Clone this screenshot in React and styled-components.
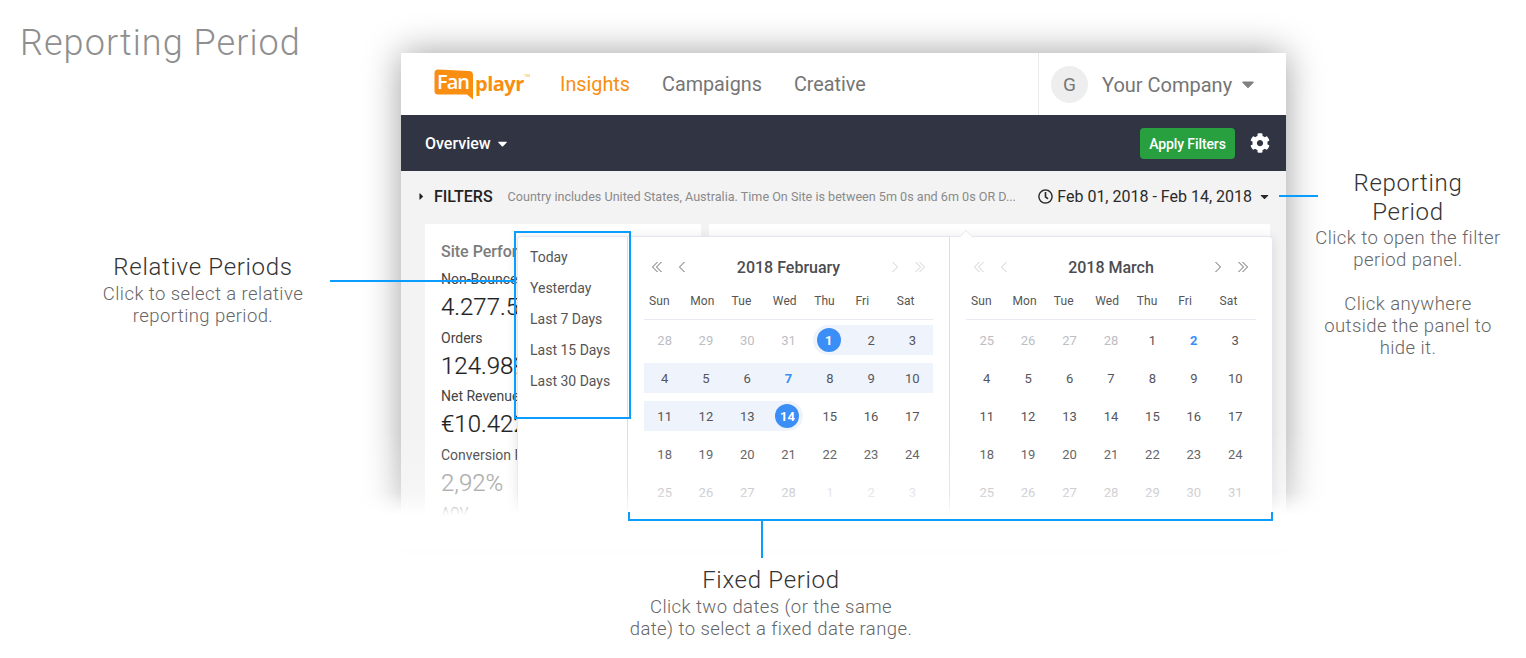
import React from "react";
import styled, { createGlobalStyle } from "styled-components";
import { FaCog, FaRegClock, FaCaretDown, FaCaretRight } from "react-icons/fa";

const Global = createGlobalStyle`
  html, body { margin: 0; padding: 0; background: #fff; }
  body { font-family: Roboto, "Liberation Sans", sans-serif; }
  * { box-sizing: border-box; }
`;

const Canvas = styled.div`
  position: relative;
  width: 1526px;
  height: 658px;
  overflow: hidden;
  background: #fff;
`;

const PageTitle = styled.div`
  position: absolute;
  left: 20px;
  top: 22px;
  font: 300 36px/42px Roboto, sans-serif;
  letter-spacing: 1.07px;
  color: #8f8f8f;
`;

const Window = styled.div`
  position: absolute;
  left: 401px;
  top: 53px;
  width: 885px;
  height: 462px;
  background: #f3f3f3;
  box-shadow: 0 0 34px rgba(0, 0, 0, 0.38);
  display: flex;
  flex-direction: column;
`;

const Header = styled.header`
  height: 62px;
  flex: none;
  background: #fff;
  display: flex;
  align-items: center;
  padding-left: 33px;
`;

const LogoWrap = styled.div`
  position: relative;
  width: 94px;
  height: 30px;
  margin-right: 32px;
  display: flex;
  align-items: center;
`;

const LogoBubble = styled.svg`
  position: absolute;
  left: 0;
  top: 0;
`;

const LogoFan = styled.span`
  position: relative;
  width: 41px;
  padding-left: 3px;
  font: 600 20px/22px "Open Sans", sans-serif;
  letter-spacing: -1px;
  color: #fff;
  margin-top: -4px;
`;

const LogoPlayr = styled.span`
  position: relative;
  font: 700 20px/22px "Open Sans", sans-serif;
  letter-spacing: -0.5px;
  color: #f98e10;
  margin-top: -1px;
`;

const LogoTm = styled.sup`
  position: absolute;
  left: 90px;
  top: 5px;
  margin: 0;
  font-size: 4px;
  line-height: 4px;
  color: #f9a850;
`;

const Nav = styled.nav`
  display: flex;
  gap: 32px;
  padding-top: 2px;
`;

const NavLink = styled.span`
  font-size: 19.8px;
  line-height: 24px;
  color: ${(p) => (p.$active ? "#f98e10" : "#757575")};
`;

const Account = styled.div`
  margin-left: auto;
  width: 248px;
  height: 100%;
  border-left: 1px solid #eaeaea;
  display: flex;
  align-items: center;
  padding-left: 12px;
  color: #757575;
`;

const Avatar = styled.div`
  width: 37px;
  height: 37px;
  border-radius: 50%;
  background: #eeeeee;
  display: flex;
  align-items: center;
  justify-content: center;
  font-size: 19px;
  color: #777;
  margin-right: 14px;
`;

const AccountName = styled.span`
  font-size: 20px;
  padding-top: 1px;
  margin-right: 6px;
`;

const Toolbar = styled.div`
  height: 56px;
  flex: none;
  background: #313543;
  color: #fff;
  display: flex;
  align-items: center;
  padding: 0 16px 0 24px;
`;

const ToolbarTitle = styled.span`
  font-size: 16px;
  font-weight: 500;
  margin-right: 4px;
`;

const ApplyButton = styled.button`
  margin-left: auto;
  width: 95px;
  height: 31px;
  border: 0;
  border-radius: 4px;
  background: #28a040;
  color: #fff;
  font: 500 14px Roboto, sans-serif;
  letter-spacing: -0.1px;
  padding: 2px 0 0;
  margin-right: 15px;
`;

const FilterRow = styled.div`
  height: 53px;
  flex: none;
  display: flex;
  align-items: center;
  padding: 0 15px 3px 15px;
`;

const FilterLabel = styled.span`
  font-size: 16px;
  font-weight: 500;
  color: #222;
  margin: 0 15px 0 7px;
`;

const FilterSummary = styled.span`
  font-size: 12.6px;
  color: #8a8a8a;
  white-space: nowrap;
`;

const DateRange = styled.div`
  margin-left: auto;
  display: flex;
  align-items: center;
  font-size: 16px;
  color: #2a2a2a;
  svg:first-child { margin-right: 4px; }
  svg:last-child { margin-left: 6px; }
`;

const Cards = styled.div`
  display: flex;
  gap: 8px;
  padding: 0 16px 0 24px;
  flex: 1;
  min-height: 0;
`;

const Card = styled.div`
  background: #fff;
  width: ${(p) => p.$w || "auto"};
  flex: ${(p) => (p.$w ? "none" : "1")};
  padding: 18px 16px 0;
  overflow: hidden;
`;

const CardTitle = styled.div`
  font-size: 16px;
  line-height: 20px;
  font-weight: 500;
  color: #7c7c7c;
  white-space: nowrap;
  margin-bottom: 7px;
`;

const MetricLabel = styled.div`
  font-size: 14px;
  line-height: 20px;
  color: #444;
  white-space: nowrap;
`;

const MetricValue = styled.div`
  font-size: 24px;
  font-weight: 300;
  -webkit-text-stroke: 0.2px currentColor;
  line-height: 37px;
  margin-bottom: 1.6px;
  color: ${(p) => p.$color || "#222"};
  white-space: nowrap;
`;

const Popup = styled.div`
  position: absolute;
  left: 116px;
  top: 183px;
  width: 756px;
  height: 279px;
  background: #fff;
  border: 1px solid #e6e6ef;
  border-bottom: 0;
  border-radius: 4px 4px 0 0;
  box-shadow: 0 2px 12px rgba(0, 0, 0, 0.12);
  display: flex;
`;

const PopupArrow = styled.div`
  position: absolute;
  left: 443px;
  top: -5px;
  width: 10px;
  height: 10px;
  background: #fff;
  border-left: 1px solid #ececf2;
  border-top: 1px solid #ececf2;
  transform: rotate(45deg);
`;

const Presets = styled.ul`
  width: 110px;
  flex: none;
  margin: 0;
  padding: 5px 12px 0;
  list-style: none;
  border-right: 1px solid #dddde3;
`;

const Preset = styled.li`
  font-size: 14px;
  line-height: 31px;
  color: #555;
  white-space: nowrap;
`;

const Calendar = styled.div`
  width: ${(p) => p.$w}px;
  flex: none;
  padding: 15px 16px 0 16px;
  border-right: ${(p) => (p.$divider ? "1px solid #dddde3" : "0")};
`;

const CalHead = styled.div`
  height: 30px;
  display: flex;
  align-items: center;
  padding: 0 7px;
`;

const NavGroup = styled.div`
  display: flex;
  gap: 13px;
  width: 37px;
  flex: none;
  color: ${(p) => (p.$off ? "#c9c9cf" : "#555")};
  svg { display: block; }
`;

const CalTitle = styled.div`
  flex: 1;
  text-align: center;
  font-size: 16px;
  font-weight: 500;
  color: #4c4c52;
`;

const WeekRow = styled.div`
  display: grid;
  grid-template-columns: repeat(7, 1fr);
  height: 38px;
  align-items: center;
  border-bottom: 1px solid #e9e9f4;
  margin-bottom: 5px;
`;

const WeekDay = styled.div`
  font-size: 12px;
  color: #555;
  padding-left: 5px;
  letter-spacing: 0.1px;
`;

const DaysGrid = styled.div`
  display: grid;
  grid-template-columns: repeat(7, 1fr);
  grid-auto-rows: 30px;
  row-gap: 8px;
`;

const dayColor = (p) => {
  if (p.$faint) return "#dcdce0";
  if (p.$muted) return "#bdbdc4";
  if (p.$today) return "#3a8ef6";
  return "#55555a";
};

const Day = styled.div`
  position: relative;
  display: flex;
  align-items: center;
  justify-content: center;
  font-size: 13px;
  font-weight: ${(p) => (p.$today ? 700 : 400)};
  color: ${dayColor};
  background: ${(p) => (p.$range ? "#eff3fc" : "transparent")};
  margin-left: ${(p) => (p.$range === "start" ? "4px" : 0)};
  margin-right: ${(p) => (p.$range === "end" ? "6px" : 0)};
  border-radius: ${(p) =>
    p.$range === "start" ? "15px 0 0 15px" : p.$range === "end" ? "0 15px 15px 0" : "0"};
`;

const DayCircle = styled.span`
  width: 24px;
  height: 24px;
  border-radius: 50%;
  background: #3a8ef6;
  color: #fff;
  font-weight: 700;
  display: flex;
  align-items: center;
  justify-content: center;
  transform: translateX(${(p) => p.$dx}px);
`;

const Fade = styled.div`
  position: absolute;
  left: 340px;
  top: 430px;
  width: 1010px;
  height: 120px;
  background: linear-gradient(
    to bottom,
    rgba(255, 255, 255, 0) 0%,
    rgba(255, 255, 255, 0.25) 52%,
    rgba(255, 255, 255, 1) 71%
  );
`;

const Blue = styled.div`
  position: absolute;
  background: #0a9cff;
`;

const HLine = styled(Blue)`
  height: 2px;
  left: ${(p) => p.$x}px;
  top: ${(p) => p.$y}px;
  width: ${(p) => p.$w}px;
`;

const VLine = styled(Blue)`
  width: 2px;
  left: ${(p) => p.$x}px;
  top: ${(p) => p.$y}px;
  height: ${(p) => p.$h}px;
`;

const PresetBox = styled.div`
  position: absolute;
  left: 514px;
  top: 231px;
  width: 117px;
  height: 188px;
  border: 2px solid #0a9cff;
`;

const Note = styled.div`
  position: absolute;
  left: ${(p) => p.$cx - 170}px;
  top: ${(p) => p.$y}px;
  width: 340px;
  text-align: center;
`;

const NoteTitle = styled.div`
  font: 300 24px/29px Roboto, sans-serif;
  letter-spacing: 0.7px;
  color: #333;
`;

const NoteText = styled.div`
  font: 300 18.5px/22px Roboto, sans-serif;
  letter-spacing: 0.42px;
  color: #666;
  margin-top: ${(p) => p.$mt || 0}px;
`;

const weekdays = ["Sun", "Mon", "Tue", "Wed", "Thu", "Fri", "Sat"];

const feb = [
  [28, 1], [29, 1], [30, 1], [31, 1], [1, 0, "start", 0, 1], [2, 0, "mid"], [3, 0, "mid"],
  [4, 0, "mid"], [5, 0, "mid"], [6, 0, "mid"], [7, 0, "mid", 1], [8, 0, "mid"], [9, 0, "mid"], [10, 0, "mid"],
  [11, 0, "mid"], [12, 0, "mid"], [13, 0, "mid"], [14, 0, "end", 0, 1], [15], [16], [17],
  [18], [19], [20], [21], [22], [23], [24],
  [25, 1], [26, 1], [27, 1], [28, 1], [1, 2], [2, 2], [3, 2],
];

const mar = [
  [25, 1], [26, 1], [27, 1], [28, 1], [1], [2, 0, null, 1], [3],
  [4], [5], [6], [7], [8], [9], [10],
  [11], [12], [13], [14], [15], [16], [17],
  [18], [19], [20], [21], [22], [23], [24],
  [25, 1], [26, 1], [27, 1], [28, 1], [29, 1], [30, 1], [31, 1],
];

const chevrons = {
  prev2: "M6.5 1 L1.5 6 L6.5 11 M10.5 1 L5.5 6 L10.5 11",
  prev: "M8.5 1 L3.5 6 L8.5 11",
  next: "M3.5 1 L8.5 6 L3.5 11",
  next2: "M1.5 1 L6.5 6 L1.5 11 M5.5 1 L10.5 6 L5.5 11",
};

function Chevron({ kind }) {
  return (
    <svg width="12" height="12" viewBox="0 0 12 12" fill="none" stroke="currentColor" strokeWidth="0.9">
      <path d={chevrons[kind]} />
    </svg>
  );
}

function Month({ title, days, w, divider, prevOff, nextOff }) {
  return (
    <Calendar $w={w} $divider={divider}>
      <CalHead>
        <NavGroup $off={prevOff}>
          <Chevron kind="prev2" />
          <Chevron kind="prev" />
        </NavGroup>
        <CalTitle>{title}</CalTitle>
        <NavGroup $off={nextOff}>
          <Chevron kind="next" />
          <Chevron kind="next2" />
        </NavGroup>
      </CalHead>
      <WeekRow>
        {weekdays.map((d) => (
          <WeekDay key={d}>{d}</WeekDay>
        ))}
      </WeekRow>
      <DaysGrid>
        {days.map(([n, muted, range, today, sel], i) => (
          <Day key={i} $muted={muted === 1} $faint={muted === 2} $range={range} $today={!!today}>
            {sel ? <DayCircle $dx={range === "start" ? -3 : 2}>{n}</DayCircle> : n}
          </Day>
        ))}
      </DaysGrid>
    </Calendar>
  );
}

function Logo() {
  return (
    <LogoWrap>
      <LogoBubble width="46" height="32" viewBox="0 0 46 32">
        <path
          d="M4 0.5 L35 2 Q39 2.2 39 6 L39 26 L39 30.5 L33 25.5 L4 25.5 Q0.5 25.5 0.5 22 L0.5 4 Q0.5 0.5 4 0.5 Z"
          fill="#f98e10"
        />
      </LogoBubble>
      <LogoFan>Fan</LogoFan>
      <LogoPlayr>playr</LogoPlayr>
      <LogoTm>TM</LogoTm>
    </LogoWrap>
  );
}

export default function App() {
  return (
    <Canvas>
      <Global />
      <PageTitle>Reporting Period</PageTitle>

      <Window>
        <Header>
          <Logo />
          <Nav>
            <NavLink $active>Insights</NavLink>
            <NavLink>Campaigns</NavLink>
            <NavLink>Creative</NavLink>
          </Nav>
          <Account>
            <Avatar>G</Avatar>
            <AccountName>Your Company</AccountName>
            <FaCaretDown size={20} color="#808080" />
          </Account>
        </Header>

        <Toolbar>
          <ToolbarTitle>Overview</ToolbarTitle>
          <FaCaretDown size={15} />
          <ApplyButton>Apply Filters</ApplyButton>
          <FaCog size={20} />
        </Toolbar>

        <FilterRow>
          <FaCaretRight size={11} color="#222" />
          <FilterLabel>FILTERS</FilterLabel>
          <FilterSummary>
            Country includes United States, Australia. Time On Site is between 5m 0s and 6m 0s OR D...
          </FilterSummary>
          <DateRange>
            <FaRegClock size={15} />
            Feb 01, 2018 - Feb 14, 2018
            <FaCaretDown size={13} />
          </DateRange>
        </FilterRow>

        <Cards>
          <Card $w="276px">
            <CardTitle>Site Performance</CardTitle>
            <MetricLabel>Non-Bounce Sessions</MetricLabel>
            <MetricValue>4.277.512</MetricValue>
            <MetricLabel>Orders</MetricLabel>
            <MetricValue>124.989</MetricValue>
            <MetricLabel>Net Revenue</MetricLabel>
            <MetricValue>€10.422.918</MetricValue>
            <MetricLabel>Conversion Rate</MetricLabel>
            <MetricValue $color="#999">2,92%</MetricValue>
            <MetricLabel>AOV</MetricLabel>
          </Card>
          <Card />
        </Cards>

        <Popup>
          <PopupArrow />
          <Presets>
            <Preset>Today</Preset>
            <Preset>Yesterday</Preset>
            <Preset>Last 7 Days</Preset>
            <Preset>Last 15 Days</Preset>
            <Preset>Last 30 Days</Preset>
          </Presets>
          <Month title="2018 February" days={feb} w={322} divider nextOff />
          <Month title="2018 March" days={mar} w={322} prevOff />
        </Popup>
      </Window>

      <Fade />

      <PresetBox />
      <HLine $x={330} $y={280} $w={185} />
      <HLine $x={1279} $y={195} $w={39} />
      <HLine $x={628} $y={519} $w={645} />
      <VLine $x={628} $y={512} $h={8} />
      <VLine $x={1271} $y={512} $h={8} />
      <VLine $x={761} $y={520} $h={38} />

      <Note $cx={203} $y={253}>
        <NoteTitle>Relative Periods</NoteTitle>
        <NoteText $mt={1}>
          Click to select a relative
          <br />
          reporting period.
        </NoteText>
      </Note>

      <Note $cx={1408} $y={169}>
        <NoteTitle>
          Reporting
          <br />
          Period
        </NoteTitle>
        <NoteText>
          Click to open the filter
          <br />
          period panel.
        </NoteText>
        <NoteText $mt={22}>
          Click anywhere
          <br />
          outside the panel to
          <br />
          hide it.
        </NoteText>
      </Note>

      <Note $cx={771} $y={566}>
        <NoteTitle>Fixed Period</NoteTitle>
        <NoteText $mt={1}>
          Click two dates (or the same
          <br />
          date) to select a fixed date range.
        </NoteText>
      </Note>
    </Canvas>
  );
}
